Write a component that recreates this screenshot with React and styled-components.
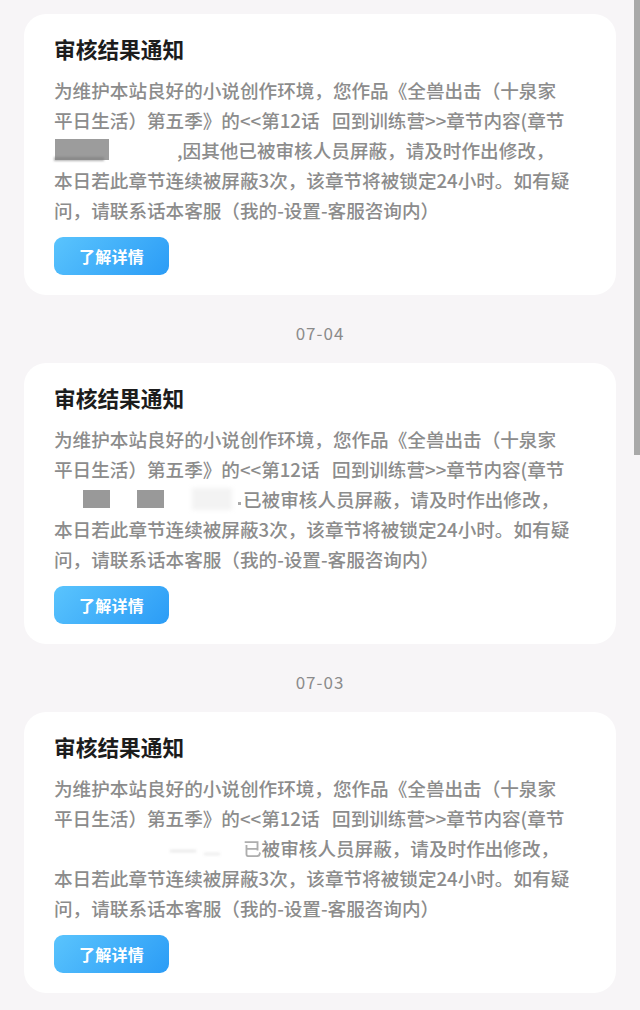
import styled, { createGlobalStyle } from "styled-components";

const GlobalStyle = createGlobalStyle`
    html, body {
        margin: 0;
        padding: 0;
        background: #f7f5f7;
        overflow: hidden;
    }
    body {
        font-family: "Noto Sans CJK SC", "Noto Sans", sans-serif;
    }
`;

const Page = styled.div`
    display: flex;
    flex-direction: column;
    padding: 14px 24px 0;
    min-height: 1010px;
    box-sizing: border-box;
`;

const ScrollThumb = styled.div`
    position: fixed;
    top: 0;
    right: 0;
    width: 6px;
    height: 455px;
    background: #a9a9a9;
`;

const DateLabel = styled.div`
    padding: 28px 0 20px;
    line-height: 20px;
    text-align: center;
    font-size: 17px;
    color: #8b8b8b;
    letter-spacing: 1px;
`;

const Card = styled.div`
    background: #fff;
    border-radius: 22px;
    padding: 20px 30px 20px;
    display: flex;
    flex-direction: column;
    align-items: flex-start;
`;

const Title = styled.h2`
    margin: 0 0 11px;
    font-size: 21.7px;
    line-height: 30px;
    font-weight: 700;
    color: #1c1c1c;
`;

const Body = styled.div`
    display: flex;
    flex-direction: column;
    font-size: 18.6px;
    line-height: 30px;
    color: #8c8c8c;
    font-weight: 500;
`;

const Line = styled.div`
    white-space: nowrap;
    display: flex;
    align-items: center;
    height: 30px;
`;

const Redacted = styled.span`
    position: relative;
    display: inline-block;
    flex: none;
    width: ${(p) => p.$width}px;
    height: 30px;
`;

const Smudge = styled.span`
    position: absolute;
    top: ${(p) => p.$top}px;
    left: ${(p) => p.$left}px;
    width: ${(p) => p.$w}px;
    height: ${(p) => p.$h}px;
    background: ${(p) => p.$color || "#9a9a9a"};
    filter: blur(${(p) => p.$blur || 0.6}px);
    opacity: ${(p) => p.$opacity || 1};
`;

const Faded = styled.span`
    opacity: ${(p) => p.$opacity};
`;

const DetailButton = styled.button`
    margin-top: 12px;
    width: 115px;
    height: 38px;
    border: none;
    border-radius: 9px;
    background: linear-gradient(135deg, #5ac4fd 0%, #2b9cf6 100%);
    color: #fff;
    font-family: inherit;
    font-size: 16px;
    font-weight: 700;
    letter-spacing: 0.2px;
    padding: 0;
    cursor: pointer;
`;

const LINE1 = "为维护本站良好的小说创作环境，您作品《全兽出击（十泉家";
const LINE2 = "平日生活）第五季》的<<第12话\u00a0\u00a0\u00a0回到训练营>>章节内容(章节";
const LINE4 = "本日若此章节连续被屏蔽3次，该章节将被锁定24小时。如有疑";
const LINE5 = "问，请联系话本客服（我的-设置-客服咨询内）";

function RedactedFirst() {
    return (
        <Line>
            <Redacted $width={123}>
                <Smudge $top={4} $left={1} $w={54} $h={21} $color="#9c9c9c" />
                <Smudge $top={22} $left={0} $w={50} $h={4} $color="#7d7d7d" $blur={1} $opacity={0.6} />
            </Redacted>
            ,因其他已被审核人员屏蔽，请及时作出修改，
        </Line>
    );
}

function RedactedSecond() {
    return (
        <Line>
            <Redacted $width={189}>
                <Smudge $top={6} $left={29} $w={27} $h={18} $color="#999" $blur={0.4} />
                <Smudge $top={6} $left={83} $w={27} $h={18} $color="#999" $blur={0.4} />
                <Smudge $top={4} $left={138} $w={40} $h={22} $color="#f3f3f3" $blur={2} />
                <Smudge $top={18} $left={184} $w={3} $h={3} $color="#aaa" $blur={0.5} />
            </Redacted>
            已被审核人员屏蔽，请及时作出修改，
        </Line>
    );
}

function RedactedThird() {
    return (
        <Line>
            <Redacted $width={189}>
                <Smudge $top={17} $left={116} $w={26} $h={2} $color="#e2e2e2" $blur={1.5} />
                <Smudge $top={20} $left={150} $w={16} $h={2} $color="#e8e8e8" $blur={1.5} />
            </Redacted>
            <Faded $opacity={0.7}>已</Faded>被审核人员屏蔽，请及时作出修改，
        </Line>
    );
}

function NoticeCard({ variant }) {
    return (
        <Card>
            <Title>审核结果通知</Title>
            <Body>
                <Line>{LINE1}</Line>
                <Line>{LINE2}</Line>
                {variant === 1 && <RedactedFirst />}
                {variant === 2 && <RedactedSecond />}
                {variant === 3 && <RedactedThird />}
                <Line>{LINE4}</Line>
                <Line>{LINE5}</Line>
            </Body>
            <DetailButton>了解详情</DetailButton>
        </Card>
    );
}

export default function App() {
    return (
        <>
            <GlobalStyle />
            <Page>
                <NoticeCard variant={1} />
                <DateLabel>07-04</DateLabel>
                <NoticeCard variant={2} />
                <DateLabel>07-03</DateLabel>
                <NoticeCard variant={3} />
            </Page>
            <ScrollThumb />
        </>
    );
}
